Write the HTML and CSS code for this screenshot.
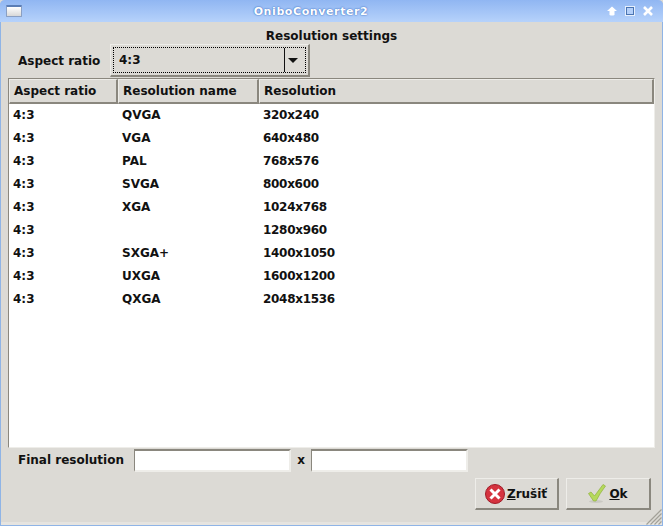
FILE: index.html
```html
<!DOCTYPE html>
<html lang="en">
<head>
    <meta charset="UTF-8">
    <title>OniboConverter2</title>
    <link rel="stylesheet" href="styles.css">
</head>
<body>
    <div class="window">
        <div class="titlebar">
            <div class="win-menu"></div>
            <div class="win-title">OniboConverter2</div>
            <div class="win-buttons">
                <svg width="10" height="10" viewBox="0 0 10 10"><path d="M5 0.5 L10 5 H7.5 V9 Q5 10 2.5 9 V5 H0 Z" fill="#fff"/></svg>
                <svg width="10" height="10" viewBox="0 0 10 10"><rect width="10" height="10" fill="#e6effc"/><rect x="1.5" y="1.5" width="7" height="7" fill="#b3cff9" stroke="#4a74b2" stroke-width="1"/></svg>
                <svg width="10" height="10" viewBox="0 0 10 10"><path d="M1 1 L9 9 M9 1 L1 9" stroke="#fff" stroke-width="2.6"/></svg>
            </div>
        </div>
        <div class="content">
            <div class="heading">Resolution settings</div>
            <div class="aspect-row">
                <label class="aspect-label">Aspect ratio</label>
                <div class="combo">
                    <div class="combo-focus">
                        <span class="combo-value">4:3</span>
                        <span class="combo-sep"></span>
                        <span class="combo-arrow"></span>
                    </div>
                </div>
            </div>
            <div class="table-box">
                <div class="table-head">
                    <div class="th col-1">Aspect ratio</div>
                    <div class="th col-2">Resolution name</div>
                    <div class="th col-3">Resolution</div>
                </div>
                <div class="table-body">
                    <div class="tr"><span class="col-1">4:3</span><span class="col-2">QVGA</span><span class="num">320x240</span></div>
                    <div class="tr"><span class="col-1">4:3</span><span class="col-2">VGA</span><span class="num">640x480</span></div>
                    <div class="tr"><span class="col-1">4:3</span><span class="col-2">PAL</span><span class="num">768x576</span></div>
                    <div class="tr"><span class="col-1">4:3</span><span class="col-2">SVGA</span><span class="num">800x600</span></div>
                    <div class="tr"><span class="col-1">4:3</span><span class="col-2">XGA</span><span class="num">1024x768</span></div>
                    <div class="tr"><span class="col-1">4:3</span><span class="col-2"></span><span class="num">1280x960</span></div>
                    <div class="tr"><span class="col-1">4:3</span><span class="col-2">SXGA+</span><span class="num">1400x1050</span></div>
                    <div class="tr"><span class="col-1">4:3</span><span class="col-2">UXGA</span><span class="num">1600x1200</span></div>
                    <div class="tr"><span class="col-1">4:3</span><span class="col-2">QXGA</span><span class="num">2048x1536</span></div>
                </div>
            </div>
            <div class="final-row">
                <label class="final-label">Final resolution</label>
                <input class="field" type="text">
                <span class="times">x</span>
                <input class="field" type="text">
            </div>
            <div class="button-row">
                <button class="btn btn-cancel">
                    <svg width="22" height="22" viewBox="0 0 22 22">
                        <circle cx="11" cy="11" r="9.5" fill="#d5333f" stroke="#a01c28"/>
                        <path d="M6.5 6.5 L15.5 15.5 M15.5 6.5 L6.5 15.5" stroke="#fff" stroke-width="3"/>
                    </svg>
                    <span><u>Z</u>rušiť</span>
                </button>
                <button class="btn btn-ok">
                    <svg width="18" height="20" viewBox="0 0 18 20">
                        <ellipse cx="8" cy="17.5" rx="7" ry="1.5" fill="#c9c8c2"/>
                        <path d="M0.5 9.5 L3 8 L6.5 12 L15 0.5 L17.5 2 Q12 9 8 17 L5.5 17 Z" fill="#b5d95c" stroke="#8fb23c" stroke-width="0.7"/>
                    </svg>
                    <span><u>O</u>k</span>
                </button>
            </div>
        </div>
        <svg class="grip" width="16" height="16" viewBox="0 0 16 16"><path d="M15.5 0.5 L0.5 15.5 M15.5 4.5 L4.5 15.5 M15.5 8.5 L8.5 15.5 M15.5 12.5 L12.5 15.5" stroke="#a3a199" stroke-width="1.2"/></svg>
    </div>
</body>
</html>
```
FILE: styles.css
```css
html, body {
    margin: 0;
    padding: 0;
    width: 100%;
    height: 100%;
    overflow: hidden;
    font-family: "DejaVu Sans", sans-serif;
    font-size: 12px;
    font-weight: bold;
    color: #111;
    background-color: #dcdad5;
}
.window {
    position: relative;
    height: 526px;
    box-sizing: border-box;
    display: flex;
    flex-direction: column;
    border-left: 1px solid #8fb4e6;
    border-right: 1px solid #8fb4e6;
    border-bottom: 1px solid #8fb4e6;
    border-radius: 5px 5px 0 0;
    background-color: #dcdad5;
    box-shadow: inset 0 -3px 0 #e6e4e0;
}
.titlebar {
    height: 22px;
    flex: none;
    display: flex;
    align-items: center;
    padding: 0 10px 0 6px;
    margin: 0 -1px;
    background: linear-gradient(to bottom, #90b6f2, #b6d2fb);
    border-radius: 5px 5px 0 0;
}
.win-menu {
    width: 14px;
    height: 9px;
    border: 1px solid #8a9fc2;
    border-top: 2px solid #5a7db5;
    border-radius: 1px;
    background: linear-gradient(to bottom, #fff, #d8d8d8);
}
.win-title {
    flex: 1;
    text-align: center;
    color: #fff;
    font-size: 11px;
    letter-spacing: 0.6px;
    text-shadow: 0 0 2px #3f72c4, 0 0 1px #3f72c4;
    padding-right: 7px;
}
.win-buttons {
    display: flex;
    align-items: center;
    gap: 8px;
}
.content {
    flex: 1;
    display: flex;
    flex-direction: column;
    padding: 0 7px 0 7px;
    min-height: 0;
}
.heading {
    height: 22px;
    line-height: 29px;
    text-align: center;
}
.aspect-row {
    display: flex;
    align-items: center;
    height: 33px;
}
.aspect-label {
    width: 102px;
    padding-left: 10px;
    box-sizing: border-box;
}
.combo {
    width: 200px;
    height: 33px;
    box-sizing: border-box;
    padding: 2px;
    border: 1px solid;
    border-color: #eeede9 #8a877e #8a877e #eeede9;
    border-width: 1px 2px 2px 1px;
}
.combo-focus {
    height: 100%;
    box-sizing: border-box;
    border: 1px dotted #000;
    display: flex;
    align-items: center;
    padding-left: 5px;
}
.combo-value {
    flex: 1;
}
.combo-sep {
    width: 1px;
    height: 24px;
    background-color: #111;
}
.combo-arrow {
    margin: 0 7px 0 3px;
    width: 0;
    height: 0;
    border-left: 5px solid transparent;
    border-right: 5px solid transparent;
    border-top: 5px solid #111;
}
.table-box {
    flex: none;
    height: 370px;
    margin-top: 1px;
    box-sizing: border-box;
    background-color: #fff;
    border-top: 1px solid #8a877e;
    border-left: 1px solid #8a877e;
    border-right: 1px solid #eeede9;
    border-bottom: 1px solid #eeede9;
    display: flex;
    flex-direction: column;
}
.table-head {
    display: flex;
    height: 25px;
    flex: none;
    background-color: #dcdad5;
}
.th {
    box-sizing: border-box;
    line-height: 23px;
    padding-left: 4px;
    border: 1px solid;
    border-width: 1px 2px 2px 1px;
    border-color: #eeede9 #8a877e #8a877e #eeede9;
}
.th.col-1 { width: 109px; }
.th.col-2 { width: 141px; }
.th.col-3 { flex: 1; }
.table-body {
    flex: 1;
}
.tr {
    display: flex;
    height: 23px;
    line-height: 23px;
    padding-left: 4px;
}
.tr .col-1 { width: 109px; }
.tr .col-2 { width: 141px; }
.num {
    letter-spacing: -0.3px;
}
.final-row {
    display: flex;
    align-items: center;
    height: 24px;
}
.final-label {
    width: 126px;
    padding-left: 10px;
    box-sizing: border-box;
}
.field {
    width: 157px;
    height: 23px;
    box-sizing: border-box;
    padding: 0;
    margin: 0;
    background-color: #fff;
    outline: none;
    border: 1px solid;
    border-color: #8a877e #eeede9 #eeede9 #8a877e;
    border-width: 2px 2px 2px 1px;
}
.times {
    width: 20px;
    text-align: center;
}
.button-row {
    display: flex;
    justify-content: flex-end;
    gap: 7px;
    margin-top: 6px;
    padding-right: 4px;
}
.btn {
    height: 32px;
    box-sizing: border-box;
    padding: 0;
    display: flex;
    align-items: center;
    justify-content: center;
    font: inherit;
    color: #111;
    background-color: #dcdad5;
    border: 1px solid;
    border-width: 1px 2px 2px 1px;
    border-color: #eeede9 #8a877e #8a877e #eeede9;
}
.btn-cancel { width: 84px; gap: 1px; padding-right: 2px; }
.btn-ok { width: 85px; gap: 3px; }
.grip {
    position: absolute;
    right: 0;
    bottom: 0;
}
```
